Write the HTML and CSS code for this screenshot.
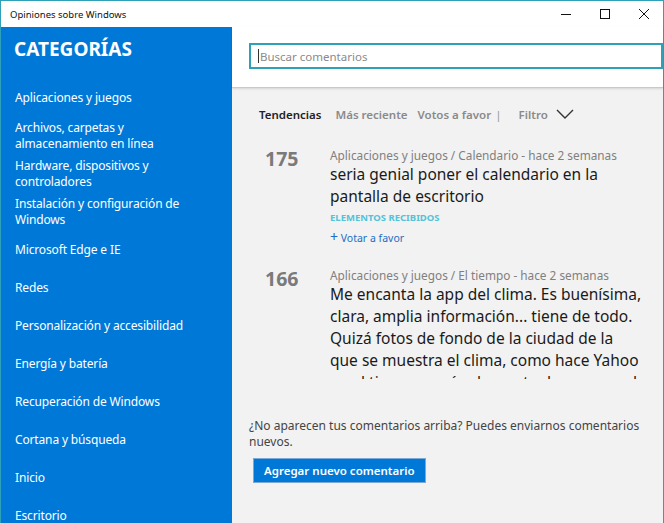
FILE: index.html
```html
<!DOCTYPE html>
<html lang="es">
<head>
  <meta charset="UTF-8">
  <title>Opiniones sobre Windows</title>
  <link rel="stylesheet" href="styles.css">
</head>
<body>
  <div class="window">
    <div class="titlebar">
      <span class="title">Opiniones sobre Windows</span>
      <div class="controls">
        <span class="ctl ctl-min"><svg width="10" height="10" viewBox="0 0 10 10"><path d="M0 5.5h10" stroke="#111" stroke-width="1"/></svg></span>
        <span class="ctl ctl-max"><svg width="10" height="10" viewBox="0 0 10 10"><rect x="0.5" y="0.5" width="9" height="9" fill="none" stroke="#111" stroke-width="1"/></svg></span>
        <span class="ctl ctl-close"><svg width="10" height="10" viewBox="0 0 10 10"><path d="M0 0L10 10M10 0L0 10" stroke="#111" stroke-width="1"/></svg></span>
      </div>
    </div>

    <div class="main">
      <div class="sidebar">
        <h1>CATEGORÍAS</h1>
        <ul class="cats">
          <li>Aplicaciones y juegos</li>
          <li>Archivos, carpetas y almacenamiento en línea</li>
          <li>Hardware, dispositivos y controladores</li>
          <li>Instalación y configuración de Windows</li>
          <li>Microsoft Edge e IE</li>
          <li>Redes</li>
          <li>Personalización y accesibilidad</li>
          <li>Energía y batería</li>
          <li>Recuperación de Windows</li>
          <li>Cortana y búsqueda</li>
          <li>Inicio</li>
          <li>Escritorio</li>
        </ul>
      </div>

      <div class="content">
        <div class="search-area">
          <div class="search-box"><span class="caret"></span>Buscar comentarios</div>
        </div>

        <div class="tabs">
          <span class="tab active">Tendencias</span>
          <span class="tab">Más reciente</span>
          <span class="tab">Votos a favor</span>
          <span class="sep">|</span>
          <span class="tab filter">Filtro</span>
          <svg class="chevron" width="18" height="10" viewBox="0 0 18 10"><path d="M1 1l8 8 8-8" fill="none" stroke="#333" stroke-width="1.4"/></svg>
        </div>

        <div class="feed">
          <div class="post">
            <div class="votes">175</div>
            <div class="post-body">
              <div class="meta">Aplicaciones y juegos / Calendario - hace 2 semanas</div>
              <div class="post-title">seria genial poner el calendario en la pantalla de escritorio</div>
              <div class="tag">ELEMENTOS RECIBIDOS</div>
              <div class="upvote"><span class="plus">+</span> Votar a favor</div>
            </div>
          </div>
          <div class="post">
            <div class="votes">166</div>
            <div class="post-body">
              <div class="meta">Aplicaciones y juegos / El tiempo - hace 2 semanas</div>
              <div class="post-title">Me encanta la app del clima. Es buenísima,<br>clara, amplia información... tiene de todo.<br>Quizá fotos de fondo de la ciudad de la<br>que se muestra el clima, como hace Yahoo<br>en el tiempo, sería el remate de una app de 200%</div>
            </div>
          </div>
        </div>

        <div class="footer">
          <p>¿No aparecen tus comentarios arriba? Puedes enviarnos comentarios nuevos.</p>
          <button class="add-btn">Agregar nuevo comentario</button>
        </div>
      </div>
    </div>
  </div>
</body>
</html>
```

FILE: styles.css
```css
body {
  margin: 0;
  width: 664px;
  height: 523px;
  overflow: hidden;
  font-family: 'Noto Sans', 'Open Sans', sans-serif;
  background-color: #fff;
}
.window {
  width: 664px;
  height: 523px;
  box-sizing: border-box;
  border: 1px solid #2ea1b9;
  border-bottom: none;
  display: flex;
  flex-direction: column;
}
.titlebar {
  height: 26px;
  display: flex;
  align-items: center;
  justify-content: space-between;
  background-color: #fff;
}
.title {
  font-size: 9.5px;
  color: #111;
  padding-left: 9px;
}
.controls {
  display: flex;
  align-items: center;
}
.ctl {
  display: flex;
  justify-content: center;
  width: 39px;
}
.main {
  flex: 1;
  display: flex;
  min-height: 0;
}
.sidebar {
  width: 231px;
  background-color: #0078d7;
  color: #fff;
}
h1 {
  font-size: 19px;
  font-weight: bold;
  margin: 0;
  padding: 10px 0 0 13px;
  height: 42px;
  line-height: 24px;
}
.cats {
  list-style: none;
  margin: 0;
  padding: 0;
}
.cats li {
  height: 38px;
  display: flex;
  align-items: center;
  padding: 0 30px 0 14px;
  font-size: 12px;
  letter-spacing: -0.15px;
  line-height: 16px;
}
.content {
  flex: 1;
  background-color: #f2f2f2;
  display: flex;
  flex-direction: column;
  min-width: 0;
}
.search-area {
  height: 61px;
  background-color: #fff;
  border-bottom: 1px solid #c9c9c9;
  box-shadow: 0 1px 2px rgba(0,0,0,0.12);
  padding: 16px 0 0 17px;
  box-sizing: border-box;
}
.search-box {
  height: 26px;
  box-sizing: border-box;
  border: 2px solid #2ea1b9;
  display: flex;
  align-items: center;
  padding-left: 7px;
  font-size: 11.5px;
  color: #8a8a8a;
}
.caret {
  width: 1px;
  height: 14px;
  background-color: #333;
  margin-right: 1px;
}
.tabs {
  display: flex;
  align-items: center;
  padding: 17px 0 0 27px;
  height: 18px;
  font-size: 11.5px;
  margin-bottom: 18px;
}
.tab {
  color: #8a8a8a;
  font-weight: 600;
  margin-right: 10px;
}
.tab.active {
  color: #222;
  margin-right: 14px;
}
.sep {
  color: #999;
  margin: 0 17px 0 -6px;
}
.tab.filter {
  margin-right: 8px;
}
.feed {
  height: 238px;
  margin-bottom: 2px;
  overflow: hidden;
}
.post {
  display: flex;
  padding-top: 6px;
  margin-bottom: 16px;
}
.votes {
  width: 65px;
  padding-left: 33px;
  box-sizing: content-box;
  font-size: 19.5px;
  font-weight: bold;
  color: #7a7a7a;
  line-height: 20px;
  padding-top: 2px;
  flex-shrink: 0;
}
.post-body {
  flex: 1;
  padding-right: 16px;
  min-width: 0;
}
.meta {
  font-size: 11.8px;
  color: #808080;
  line-height: 16px;
}
.post-title {
  font-size: 15.5px;
  line-height: 22px;
  color: #1a1a1a;
}
.tag {
  font-size: 9.5px;
  font-weight: bold;
  color: #52c3d9;
  margin-top: 3px;
  line-height: 16px;
}
.upvote {
  font-size: 10.5px;
  color: #1a6fc4;
  margin-top: 4px;
  line-height: 14px;
}
.plus {
  font-size: 14px;
}
.footer {
  padding: 37px 8px 0 17px;
}
.footer p {
  margin: 0 0 8px;
  font-size: 12px;
  line-height: 16px;
  color: #444;
}
.add-btn {
  margin-left: 4px;
  background-color: #0078d7;
  color: #fff;
  border: 1px solid #7aa9d6;
  font-family: inherit;
  font-size: 11.5px;
  font-weight: 600;
  padding: 0 10px;
  height: 25px;
}
```
